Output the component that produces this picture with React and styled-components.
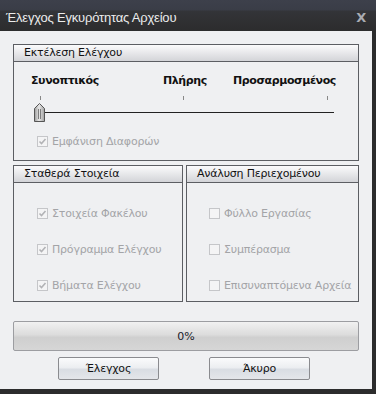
import styled, { createGlobalStyle } from 'styled-components';

const Global = createGlobalStyle`
  html, body {
    margin: 0;
    padding: 0;
    background: #2b2b2b;
  }
  * {
    box-sizing: border-box;
  }
`;

const Window = styled.div`
  width: 376px;
  height: 394px;
  display: flex;
  flex-direction: column;
  font-family: 'DejaVu Sans', 'Liberation Sans', sans-serif;
  font-size: 11px;
  overflow: hidden;
`;

const TitleBar = styled.div`
  height: 31px;
  flex: none;
  display: flex;
  align-items: center;
  justify-content: space-between;
  padding: 4px 10px 0 6px;
  background: linear-gradient(to bottom, #3d404b 0, #3a3d47 10px, #333438 11px, #2c2c2d 100%);
  color: #ececec;
  font-family: 'Liberation Sans', sans-serif;
  font-size: 13px;
  letter-spacing: -0.2px;
`;

const Close = styled.span`
  color: #a9acb2;
  font-family: 'DejaVu Sans', sans-serif;
  font-weight: bold;
  font-size: 13px;
`;

const Body = styled.div`
  flex: 1;
  display: flex;
  flex-direction: column;
  background: #eff0f2;
  border-right: 4px solid #2c2c2d;
  border-bottom: 5px solid #2c2c2d;
  padding: 13px 13px 0 13px;
`;

const Group = styled.div`
  border: 1px solid #5c5e63;
  display: flex;
  flex-direction: column;
  height: ${(p) => p.$h}px;
`;

const GroupHeader = styled.div`
  height: 17px;
  flex: none;
  border-bottom: 1px solid #5c5e63;
  background: linear-gradient(to bottom, #fbfbfc, #d3d4d8);
  padding-left: 10px;
  line-height: 16px;
  color: #111;
  font-size: 11px;
  letter-spacing: -0.2px;
`;

const SliderBlock = styled.div`
  padding: 12px 22px 0 17px;
`;

const Labels = styled.div`
  display: grid;
  grid-template-columns: 1fr 1fr auto;
  font-weight: bold;
  color: #111;
  font-size: 11px;
  letter-spacing: -0.4px;
  height: 14px;
`;

const Label = styled.span`
  text-align: ${(p) => p.$align || 'left'};
  padding-left: ${(p) => p.$pad || 0}px;
`;

const Track = styled.div`
  position: relative;
  height: 42px;
  margin-top: 5px;
`;

const Tick = styled.div`
  position: absolute;
  top: 3px;
  left: ${(p) => p.$x}px;
  width: 1px;
  height: 4px;
  background: #888;
`;

const Line = styled.div`
  position: absolute;
  top: 19px;
  left: 10px;
  right: 2px;
  height: 1px;
  background: #222;
`;

const Thumb = styled.svg`
  position: absolute;
  left: 3px;
  top: 10px;
`;

const CheckRow = styled.label`
  display: flex;
  align-items: center;
  gap: 4px;
  color: #a3a4a7;
  font-size: 11px;
  letter-spacing: -0.2px;
  padding-left: ${(p) => p.$pad}px;
`;

const Columns = styled.div`
  display: grid;
  grid-template-columns: 170px 1fr;
  gap: 3px;
  margin-top: 4px;
`;

const Items = styled.div`
  display: flex;
  flex-direction: column;
  gap: 23px;
  padding-top: 24px;
`;

const Progress = styled.div`
  margin-top: 19px;
  height: 30px;
  border: 1px solid #9c9da1;
  border-radius: 2px;
  background: linear-gradient(to bottom, #f1f1f1 0%, #dcdcdc 45%, #cfcfcf 55%, #d6d6d6 100%);
  display: flex;
  align-items: center;
  justify-content: center;
  color: #1a1a2a;
  font-size: 11px;
`;

const Buttons = styled.div`
  display: flex;
  gap: 50px;
  padding-left: 45px;
  margin-top: 6px;
`;

const Button = styled.button`
  width: 101px;
  height: 23px;
  border: 1px solid #8a8b8f;
  border-radius: 2px;
  background: linear-gradient(to bottom, #fafbfc 0%, #eceef1 45%, #d9dde3 55%, #e4e6ea 100%);
  font-family: 'DejaVu Sans', 'Liberation Sans', sans-serif;
  font-size: 11px;
  color: #111;
  padding: 0;
  letter-spacing: -0.2px;
`;

function Check({ checked }) {
  return (
    <svg width="11" height="11" viewBox="0 0 11 11">
      <rect x="0.5" y="0.5" width="10" height="10" fill="#f4f4f5" stroke="#c5c6c9" />
      {checked && (
        <path d="M2.5 5.5 L4.5 7.5 L8.5 3" fill="none" stroke="#b2b3b6" strokeWidth="1.6" />
      )}
    </svg>
  );
}

function Item({ checked, text, pad }) {
  return (
    <CheckRow $pad={pad}>
      <Check checked={checked} />
      <span>{text}</span>
    </CheckRow>
  );
}

export default function App() {
  return (
    <>
      <Global />
      <Window>
        <TitleBar>
          <span>Έλεγχος Εγκυρότητας Αρχείου</span>
          <Close>X</Close>
        </TitleBar>
        <Body>
          <Group $h={117}>
            <GroupHeader>Εκτέλεση Ελέγχου</GroupHeader>
            <SliderBlock>
              <Labels>
                <Label>Συνοπτικός</Label>
                <Label $pad={31}>Πλήρης</Label>
                <Label>Προσαρμοσμένος</Label>
              </Labels>
              <Track>
                <Tick $x={9} />
                <Tick $x={152} />
                <Tick $x={296} />
                <Line />
                <Thumb width="11" height="19" viewBox="0 0 11 19">
                  <defs>
                    <linearGradient id="tg" x1="0" x2="1">
                      <stop offset="0" stopColor="#9a9a9a" />
                      <stop offset="0.45" stopColor="#e8e8e8" />
                      <stop offset="1" stopColor="#a0a0a0" />
                    </linearGradient>
                  </defs>
                  <path d="M0.5 5.5 L5.5 0.5 L10.5 5.5 L10.5 18.5 L0.5 18.5 Z" fill="url(#tg)" stroke="#555" />
                  <path d="M4.5 6 L4.5 16 M6.5 6 L6.5 16" stroke="#7d7d7d" />
                </Thumb>
              </Track>
              <CheckRow $pad={6}>
                <Check checked />
                <span>Εμφάνιση Διαφορών</span>
              </CheckRow>
            </SliderBlock>
          </Group>
          <Columns>
            <Group $h={137}>
              <GroupHeader>Σταθερά Στοιχεία</GroupHeader>
              <Items>
                <Item checked pad={23} text="Στοιχεία Φακέλου" />
                <Item checked pad={23} text="Πρόγραμμα Ελέγχου" />
                <Item checked pad={23} text="Βήματα Ελέγχου" />
              </Items>
            </Group>
            <Group $h={137}>
              <GroupHeader>Ανάλυση Περιεχομένου</GroupHeader>
              <Items>
                <Item pad={22} text="Φύλλο Εργασίας" />
                <Item pad={22} text="Συμπέρασμα" />
                <Item pad={22} text="Επισυναπτόμενα Αρχεία" />
              </Items>
            </Group>
          </Columns>
          <Progress>0%</Progress>
          <Buttons>
            <Button>Έλεγχος</Button>
            <Button>Άκυρο</Button>
          </Buttons>
        </Body>
      </Window>
    </>
  );
}
